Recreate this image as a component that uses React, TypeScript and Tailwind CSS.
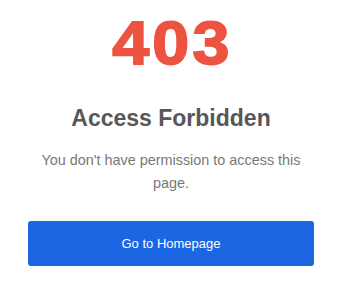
import React from 'react';

const App: React.FC = () => {
  return (
    <div
      className="w-[342px] min-h-[298px] bg-white px-[28px] pt-[12px] text-center"
      style={{ fontFamily: '"Liberation Sans", Arial, sans-serif' }}
    >
      {/* Error code */}
      <h1 className="text-[62px] font-bold leading-none text-[#ec5340]">
        <span className="inline-block origin-center scale-x-[1.07] pl-[3px] tracking-[3px] [-webkit-text-stroke:1.8px_#ec5340]">
          403
        </span>
      </h1>

      {/* Title */}
      <h2 className="mt-[33px] text-[23px] font-bold leading-none text-[#575757]">
        Access Forbidden
      </h2>

      {/* Message */}
      <p className="mt-[19px] text-[14.4px] leading-[23px] text-[#787878]">
        You don't have permission to access this page.
      </p>

      {/* Action */}
      <button className="mt-[26px] h-[45px] w-full rounded-[3px] bg-[#1a66e3] text-[13px] text-white">
        Go to Homepage
      </button>
    </div>
  );
};

export default App;
